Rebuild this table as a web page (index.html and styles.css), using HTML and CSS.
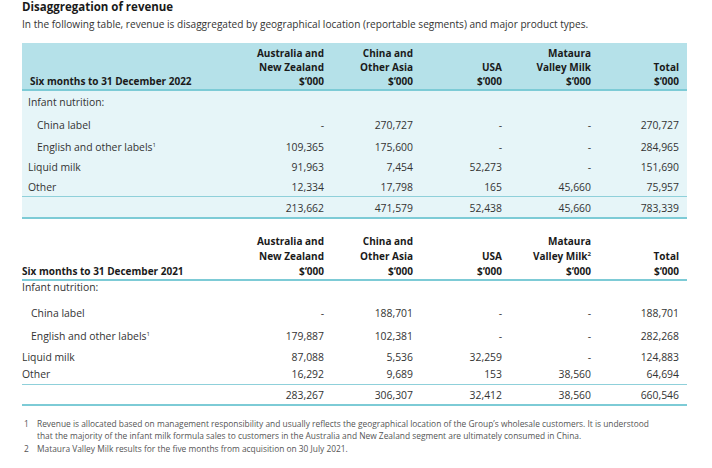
FILE: index.html
```html
<!DOCTYPE html>
<html>
<head>
<meta charset="utf-8">
<link rel="stylesheet" href="styles.css">
</head>
<body>
<div class="page">
  <h1 class="title">Disaggregation of revenue</h1>
  <p class="intro">In the following table, revenue is disaggregated by geographical location (reportable segments) and major product types.</p>

  <div class="tbl tbl-shaded">
    <div class="row head">
      <div class="c lbl">Six months to 31 December 2022</div>
      <div class="c num">Australia and<br>New Zealand<br>$‘000</div>
      <div class="c num">China and<br>Other Asia<br>$‘000</div>
      <div class="c num">USA<br>$‘000</div>
      <div class="c num">Mataura<br>Valley Milk<br>$‘000</div>
      <div class="c num">Total<br>$‘000</div>
    </div>
    <div class="body">
      <div class="row r1">
        <div class="c lbl">Infant nutrition:</div>
        <div class="c num"></div><div class="c num"></div><div class="c num"></div><div class="c num"></div><div class="c num"></div>
      </div>
      <div class="row r2">
        <div class="c lbl sub">China label</div>
        <div class="c num">-</div><div class="c num">270,727</div><div class="c num">-</div><div class="c num">-</div><div class="c num">270,727</div>
      </div>
      <div class="row r3">
        <div class="c lbl sub">English and other labels<sup>1</sup></div>
        <div class="c num">109,365</div><div class="c num">175,600</div><div class="c num">-</div><div class="c num">-</div><div class="c num">284,965</div>
      </div>
      <div class="row r4">
        <div class="c lbl">Liquid milk</div>
        <div class="c num">91,963</div><div class="c num">7,454</div><div class="c num">52,273</div><div class="c num">-</div><div class="c num">151,690</div>
      </div>
      <div class="row r5">
        <div class="c lbl">Other</div>
        <div class="c num">12,334</div><div class="c num">17,798</div><div class="c num">165</div><div class="c num">45,660</div><div class="c num">75,957</div>
      </div>
      <div class="row total">
        <div class="c lbl"></div>
        <div class="c num">213,662</div><div class="c num">471,579</div><div class="c num">52,438</div><div class="c num">45,660</div><div class="c num">783,339</div>
      </div>
    </div>
  </div>

  <div class="tbl tbl-plain">
    <div class="row head">
      <div class="c lbl">Six months to 31 December 2021</div>
      <div class="c num">Australia and<br>New Zealand<br>$‘000</div>
      <div class="c num">China and<br>Other Asia<br>$‘000</div>
      <div class="c num">USA<br>$‘000</div>
      <div class="c num">Mataura<br>Valley Milk<sup>2</sup><br>$‘000</div>
      <div class="c num">Total<br>$‘000</div>
    </div>
    <div class="body">
      <div class="row r1">
        <div class="c lbl">Infant nutrition:</div>
        <div class="c num"></div><div class="c num"></div><div class="c num"></div><div class="c num"></div><div class="c num"></div>
      </div>
      <div class="row r2">
        <div class="c lbl sub">China label</div>
        <div class="c num">-</div><div class="c num">188,701</div><div class="c num">-</div><div class="c num">-</div><div class="c num">188,701</div>
      </div>
      <div class="row r3">
        <div class="c lbl sub">English and other labels<sup>1</sup></div>
        <div class="c num">179,887</div><div class="c num">102,381</div><div class="c num">-</div><div class="c num">-</div><div class="c num">282,268</div>
      </div>
      <div class="row r4">
        <div class="c lbl">Liquid milk</div>
        <div class="c num">87,088</div><div class="c num">5,536</div><div class="c num">32,259</div><div class="c num">-</div><div class="c num">124,883</div>
      </div>
      <div class="row r5">
        <div class="c lbl">Other</div>
        <div class="c num">16,292</div><div class="c num">9,689</div><div class="c num">153</div><div class="c num">38,560</div><div class="c num">64,694</div>
      </div>
      <div class="row total">
        <div class="c lbl"></div>
        <div class="c num">283,267</div><div class="c num">306,307</div><div class="c num">32,412</div><div class="c num">38,560</div><div class="c num">660,546</div>
      </div>
    </div>
  </div>

  <ol class="notes">
    <li><span class="n">1</span><span class="t">Revenue is allocated based on management responsibility and usually reflects the geographical location of the Group’s wholesale customers. It is understood that the majority of the infant milk formula sales to customers in the Australia and New Zealand segment are ultimately consumed in China.</span></li>
    <li><span class="n">2</span><span class="t">Mataura Valley Milk results for the five months from acquisition on 30 July 2021.</span></li>
  </ol>
</div>
</body>
</html>
```

FILE: styles.css
```css
* { box-sizing: border-box; }
html, body { margin: 0; padding: 0; background: #ffffff; }
body {
  font-family: "Open Sans", "Noto Sans", sans-serif;
  color: #333333;
}
.page {
  padding: 0 25px 0 22px;
}
.title {
  margin: 0;
  font-size: 11.5px;
  line-height: 14px;
  font-weight: 700;
  color: #1a1a1a;
}
.intro {
  margin: 3px 0 0;
  font-size: 10.1px;
  line-height: 14px;
  color: #333333;
}
.tbl {
  width: 665px;
  font-size: 10.4px;
}
.tbl-shaded { margin-top: 12px; }
.tbl-plain { margin-top: 15px; }

.row {
  display: grid;
  grid-template-columns: 213px 89px 89px 89px 89px 88px;
  padding-right: 8px;
  height: 21px;
  align-items: center;
}
.c { white-space: nowrap; }
.num { text-align: right; }
.lbl.sub { padding-left: 9px; }

.head {
  height: auto;
  align-items: end;
  font-size: 10px;
  font-weight: 700;
  color: #1a1a1a;
  line-height: 14px;
  padding-top: 3px;
  padding-bottom: 1px;
  border-bottom: 2px solid #7dcbd6;
}
.tbl-plain .head { line-height: 15px; padding-top: 0; padding-bottom: 0; }

/* shaded table (2022) */
.tbl-shaded .head { background: #b5e1e9; }
.tbl-shaded .body { background: #e6f5f8; }
.tbl-shaded .row {
  padding-left: 6px;
  grid-template-columns: 207px 89px 89px 89px 89px 88px;
}
.tbl-shaded .head .lbl { padding-left: 2px; }
.tbl-shaded .r1 { height: 22px; }
.tbl-shaded .r2 { height: 23px; }
.tbl-shaded .r3 { height: 21px; }
.tbl-shaded .r4 { height: 20px; }
.tbl-shaded .r5 { height: 19px; }

/* plain table (2021) */
.tbl-plain .r1 { height: 22px; align-items: start; line-height: 13px; }
.tbl-plain .r2 { height: 22px; align-items: start; line-height: 20px; }
.tbl-plain .r5 { height: 17px; align-items: start; line-height: 15px; }

.row.total {
  border-top: 1px solid #8fd0da;
  border-bottom: 2px solid #7dcbd6;
  height: 23px;
  padding-top: 1px;
}
.tbl-plain .row.total { height: 22px; padding-top: 0; }

sup {
  font-size: 6px;
  line-height: 0;
  vertical-align: 4px;
}

.notes {
  list-style: none;
  margin: 12px 0 0;
  padding: 0;
  font-size: 8.4px;
  line-height: 12px;
  color: #555555;
}
.notes li {
  display: flex;
  margin-bottom: 1px;
}
.notes .n {
  flex: 0 0 15px;
  padding-left: 2px;
}
.notes .t {
  max-width: 622px;
}
```
